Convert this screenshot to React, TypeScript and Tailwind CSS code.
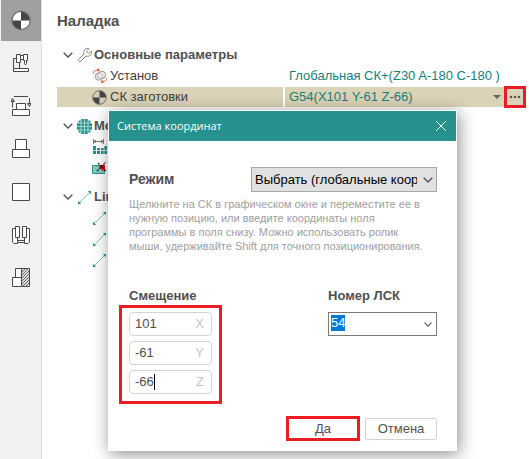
import { useState, ReactNode } from 'react';
import { Wrench } from 'lucide-react';

interface TreeRow {
  id: string;
  icon: ReactNode;
  label?: string;
  value?: string;
}

// Datum symbol: a circle split into quarters
const DatumIcon = ({ className, light = '#fff' }: { className: string; light?: string }) => (
  <svg viewBox="0 0 20 20" className={className} aria-hidden="true">
    <circle cx="10" cy="10" r="9.2" fill={light} />
    <path d="M10 1A9 9 0 0 1 19 10H10ZM10 19A9 9 0 0 1 1 10H10Z" fill="#444" />
    <circle cx="10" cy="10" r="9.1" fill="none" stroke="#666" strokeWidth="1.2" />
  </svg>
);

const ToolSvg = ({ children }: { children: ReactNode }) => (
  <svg viewBox="0 0 20 21" className="h-[21px] w-5" fill="#fff" stroke="#484848" aria-hidden="true">
    {children}
  </svg>
);

const tools = [
  {
    id: 'machine',
    title: 'Станок',
    icon: (
      <ToolSvg>
        <path d="M5.5 6.5H2.5V16.5M8.5 10.5V16.5" fill="none" />
        <path d="M2.5 16.5H17.5V19.5H2.5Z" />
        <path d="M9.5 3.5H12.5V7.5H9.5Z" />
        <path d="M5.5 2.5H9.5V10.5H5.5ZM12.5 2.5H16.5V8.5H12.5Z" />
        <path d="M13.5 8.5V11.5L14.5 13L15.5 11.5V8.5" />
      </ToolSvg>
    ),
  },
  {
    id: 'setup',
    title: 'Установка',
    icon: (
      <ToolSvg>
        <path d="M3 1.5H17M1.5 4V12.5M18.5 3V11" fill="none" />
        <path d="M-0.5 6.5L1.5 3.5L3.5 6.5ZM16.5 8.5L18.5 11.5L20.5 8.5Z" fill="#aaa" />
        <path d="M5.5 8.5H14.5V14.5H5.5ZM1.5 14.5H18.5V20.5H1.5Z" />
      </ToolSvg>
    ),
  },
  {
    id: 'part',
    title: 'Деталь',
    icon: (
      <ToolSvg>
        <path d="M4.5 1.5H15.5V11.5H4.5ZM1.5 11.5H18.5V19.5H1.5Z" />
      </ToolSvg>
    ),
  },
  {
    id: 'stock',
    title: 'Заготовка',
    icon: (
      <ToolSvg>
        <path d="M1.5 2.5H18.5V19.5H1.5Z" />
      </ToolSvg>
    ),
  },
  {
    id: 'fixture',
    title: 'Оснастка',
    icon: (
      <ToolSvg>
        <path d="M4.5 4.5H1.5V18L3 19.5H6.5V13.5M15.5 4.5H18.5V18L17 19.5H13.5V13.5" />
        <path d="M6.5 16.5H13.5M6.5 18.5H13.5" fill="none" />
        <path d="M4.5 2.5H8.5V13.5H4.5ZM11.5 2.5H15.5V13.5H11.5Z" />
      </ToolSvg>
    ),
  },
  {
    id: 'rest',
    title: 'Остаток',
    icon: (
      <ToolSvg>
        <path d="M4.5 1.5H10.5V10.5H4.5ZM1.5 10.5H10.5V19.5H1.5Z" />
        <path d="M10.5 1.5H18.5V19.5H10.5Z" fill="#ddd" />
        <path
          d="M11 5L14 2M11 8L17 2M11 11L18 4M11 14L18 7M11 17L18 10M12 19L18 13M15 19L18 16"
          fill="none"
          strokeWidth="0.8"
        />
      </ToolSvg>
    ),
  },
];

const Chevron = ({ className }: { className: string }) => (
  <svg viewBox="0 0 10 6" className={className} fill="none" stroke="#555" strokeWidth="1.4" aria-hidden="true">
    <path d="M0.7 0.7L5 5L9.3 0.7" />
  </svg>
);

const RotateIcon = () => (
  <svg viewBox="0 0 16 16" className="size-4" fill="none" aria-hidden="true">
    <path d="M1 5.5C1.5 3.5 3 2.2 5 2M15 9.5C14.8 11.5 13 13.5 11 13.8" stroke="#f4866c" strokeWidth="1.1" />
    <path d="M5 0.8H7.4V3.2H5ZM9 12.6H11.4V15H9Z" fill="#ee6546" />
    <circle cx="9.8" cy="7" r="3.8" fill="#f4f4f4" stroke="#888" strokeWidth="0.9" />
    <circle cx="6.8" cy="8.6" r="3.7" fill="#ddd" stroke="#999" strokeWidth="0.9" />
    <circle cx="8.4" cy="7.6" r="2.6" fill="#eee" stroke="#aaa" strokeWidth="0.7" />
  </svg>
);

const MeshIcon = () => (
  <svg viewBox="0 0 15 15" className="size-[15px]" fill="#26938d" aria-hidden="true">
    <path d="M4 0H11V1.5H13.5V4H15V11H13.5V13.5H11V15H4V13.5H1.5V11H0V4H1.5V1.5H4Z" />
    <path d="M4 0V15M7.5 0V15M11 0V15M0 4H15M0 7.5H15M0 11H15" stroke="#c4e3e1" strokeWidth="0.8" />
  </svg>
);

const SpacingIcon = () => (
  <svg viewBox="0 0 16 16" className="size-4" aria-hidden="true">
    <path d="M1.5 0V5M11.5 0V5M2 2.5H11M4 1L2 2.5L4 4M9 1L11 2.5L9 4" fill="none" stroke="#555" strokeWidth="0.8" />
    <path d="M1 7H4V15H1ZM5 9H8V15H5ZM9 9H12V15H9ZM12 7H15V15H12Z" fill="#26938d" />
    <path d="M0 11.5H16M4.5 6V16M8.5 6V16M12 6V16" stroke="#fff" strokeWidth="0.7" />
  </svg>
);

const ToleranceIcon = () => (
  <svg viewBox="0 0 16 16" className="size-4" aria-hidden="true">
    <path d="M0.5 5.5H12.5V13.5H0.5Z" fill="#86c5c1" stroke="#26938d" />
    <path d="M7 5L13 5V11C10 10.5 7.5 9 7 5Z" fill="#f00" />
    <path d="M5 11L14 2M6 3L14 11" stroke="#111" strokeWidth="1.1" strokeDasharray="2 1" />
  </svg>
);

const LinkIcon = () => (
  <svg viewBox="0 0 15 15" className="size-[15px]" aria-hidden="true">
    <path d="M2 13L13 2" stroke="#6bb7b2" strokeWidth="0.9" />
    <path d="M10.8 1H14V4.2ZM1 10.8V14H4.2Z" fill="#26938d" />
  </svg>
);

const groups: { id: string; icon: ReactNode; label: string; rows: TreeRow[] }[] = [
  {
    id: 'main',
    icon: <Wrench className="size-4 text-[#808080]" strokeWidth={1.4} />,
    label: 'Основные параметры',
    rows: [
      { id: 'setup', icon: <RotateIcon />, label: 'Установ', value: 'Глобальная СК+(Z30 A-180 C-180 )' },
      {
        id: 'wcs',
        icon: <DatumIcon className="size-[15px]" light="#d3ccb6" />,
        label: 'СК заготовки',
        value: 'G54(X101 Y-61 Z-66)',
      },
    ],
  },
  {
    id: 'mesh',
    icon: <MeshIcon />,
    label: 'Ме',
    rows: [
      { id: 'spacing', icon: <SpacingIcon /> },
      { id: 'tolerance', icon: <ToleranceIcon /> },
    ],
  },
  {
    id: 'links',
    icon: <LinkIcon />,
    label: 'Lin',
    rows: [
      { id: 'link1', icon: <LinkIcon /> },
      { id: 'link2', icon: <LinkIcon /> },
      { id: 'link3', icon: <LinkIcon /> },
    ],
  },
];

const SetupTree = ({ selected, onSelect }: { selected: string; onSelect: (id: string) => void }) => (
  <div className="mt-[14px] flex flex-col gap-[9px]">
    {groups.map((group) => (
      <section key={group.id} className="flex flex-col gap-px">
        <div className="flex h-5 items-center pl-[6px]">
          <Chevron className="h-[6px] w-[10px]" />
          <span className="ml-1 flex w-[17px]">{group.icon}</span>
          <h2 className="text-[13px] leading-5 font-bold whitespace-nowrap text-[#505050]">{group.label}</h2>
        </div>
        {group.rows.map((row) => (
          <div
            key={row.id}
            onClick={() => onSelect(row.id)}
            className={`flex h-5 text-[13px] leading-5 whitespace-nowrap ${row.id === selected ? 'bg-[#dbd3b8]' : ''}`}
          >
            <div className="flex w-[226px] shrink-0 items-center pl-[35px]">
              <span className="flex w-[18px] shrink-0">{row.icon}</span>
              <span className="text-[#404040]">{row.label}</span>
            </div>
            {row.value && (
              <div className="flex min-w-0 flex-1 items-center border-l-2 border-white pl-1 text-[#14807a]">
                <span>{row.value}</span>
                {row.id === selected && (
                  <>
                    <button type="button" aria-label="Список" className="ml-auto px-[3px]">
                      <svg viewBox="0 0 8 4" className="h-1 w-2" fill="#666">
                        <path d="M0 0H8L4 4Z" />
                      </svg>
                    </button>
                    <button
                      type="button"
                      aria-label="Изменить"
                      className="-my-px flex h-[22px] w-[22px] shrink-0 items-center justify-center border-3 border-[#ed1c24]"
                    >
                      <svg viewBox="0 0 12 4" className="h-1 w-3" fill="#555">
                        <circle cx="2" cy="2" r="1.3" />
                        <circle cx="6" cy="2" r="1.3" />
                        <circle cx="10" cy="2" r="1.3" />
                      </svg>
                    </button>
                  </>
                )}
              </div>
            )}
          </div>
        ))}
      </section>
    ))}
  </div>
);

const axes = ['X', 'Y', 'Z'] as const;

const CoordinateDialog = ({ onClose }: { onClose: () => void }) => {
  const [offset, setOffset] = useState({ X: '101', Y: '-61', Z: '-66' });
  const [lcs, setLcs] = useState('54');

  return (
    <div
      role="dialog"
      aria-labelledby="dialog-title"
      className="absolute top-[110px] left-[108px] w-[349px] border border-white bg-white text-[13px] text-[#505050] shadow-[2px_3px_16px_rgba(0,0,0,0.45)]"
    >
      <header className="flex h-[30px] items-center justify-between bg-[#26918d] pr-[9px] pl-2 text-white">
        <h2 id="dialog-title" className="font-['Open_Sans','Noto_Sans',sans-serif] text-[11px]">
          Система координат
        </h2>
        <button type="button" aria-label="Закрыть" onClick={onClose}>
          <svg viewBox="0 0 12 12" className="size-3" stroke="currentColor">
            <path d="M1 1L11 11M11 1L1 11" />
          </svg>
        </button>
      </header>

      <div className="px-[19px] pt-[26px] pb-[9px]">
        <div className="flex items-center justify-between pl-px">
          <label htmlFor="mode" className="text-[14px] font-bold">
            Режим
          </label>
          <div className="relative">
            <select
              id="mode"
              className="block h-[25px] w-[186px] appearance-none overflow-hidden border border-[#a9a9a9] bg-[#e1e1e1] pr-[19px] pl-[3px] text-black"
            >
              <option>Выбрать (глобальные координаты)</option>
            </select>
            <Chevron className="pointer-events-none absolute top-[10px] right-1 h-[6px] w-[10px]" />
          </div>
        </div>

        <p className="mt-[5px] pr-2 pl-px text-[11px] leading-[14px] text-[#a0a0a0]">
          Щелкните на СК в графическом окне и переместите ее в нужную позицию, или введите координаты ноля программы в
          поля снизу. Можно использовать ролик мыши, удерживайте Shift для точного позиционирования.
        </p>

        <div className="mt-[34px] flex items-start justify-between">
          <fieldset>
            <legend className="pl-px leading-[18px] font-bold">Смещение</legend>
            <div className="-ml-[9px] flex w-[103px] flex-col gap-[5px] border-3 border-[#ed1c24] px-[7px] pt-1 pb-[7px]">
              {axes.map((axis) => (
                <label
                  key={axis}
                  className="flex h-6 w-[83px] items-center rounded border border-[#d4d4d4] pr-[7px] pl-[5px]"
                >
                  <input
                    value={offset[axis]}
                    onChange={(e) => setOffset({ ...offset, [axis]: e.target.value })}
                    className="field-sizing-content outline-none"
                  />
                  {axis === 'Z' && <span className="h-4 w-px bg-black" />}
                  <span className="ml-auto text-[#c4c4c4]">{axis}</span>
                </label>
              ))}
            </div>
          </fieldset>

          <div className="w-[109px]">
            <label htmlFor="lcs" className="block leading-[18px] font-bold">
              Номер ЛСК
            </label>
            <div className="mt-[7px] flex h-6 items-start justify-between border border-[#7a7a7a] py-[2px] pr-1 pl-[2px]">
              <input
                id="lcs"
                value={lcs}
                onChange={(e) => setLcs(e.target.value)}
                className="field-sizing-content h-4 bg-[#0078d7] leading-4 text-white outline-none"
              />
              <button type="button" aria-label="Выбрать номер" className="self-center">
                <Chevron className="h-[5px] w-2" />
              </button>
            </div>
          </div>
        </div>

        <div className="mt-3 flex items-center justify-end gap-[5px]">
          <button
            type="button"
            onClick={onClose}
            className="h-[25px] w-[74px] border-3 border-[#ed1c24] leading-[19px]"
          >
            Да
          </button>
          <button
            type="button"
            onClick={onClose}
            className="h-[22px] w-[72px] rounded-xs border border-[#d4d4d4] leading-5"
          >
            Отмена
          </button>
        </div>
      </div>
    </div>
  );
};

export default function App() {
  const [selected, setSelected] = useState('wcs');
  const [dialogOpen, setDialogOpen] = useState(true);

  return (
    <div className="relative flex min-h-screen bg-white font-['Liberation_Sans',Arial,sans-serif]">
      <nav className="flex w-[42px] shrink-0 flex-col border-r border-[#e0e0e0] bg-[#f1f1f1] pl-px">
        <button
          type="button"
          aria-label="Наладка"
          onClick={() => setDialogOpen(true)}
          className="flex h-[41px] items-center justify-center bg-[#9f9f9f]"
        >
          <DatumIcon className="h-[21px] w-5" />
        </button>
        {tools.map((tool) => (
          <button
            key={tool.id}
            type="button"
            aria-label={tool.title}
            className="flex h-[43px] items-center justify-center"
          >
            {tool.icon}
          </button>
        ))}
      </nav>

      <main className="min-w-0 flex-1 pt-[11px] pr-[3px] pl-[15px]">
        <h1 className="text-[15px] leading-5 font-bold text-[#505050]">Наладка</h1>
        <SetupTree selected={selected} onSelect={setSelected} />
      </main>

      {dialogOpen && <CoordinateDialog onClose={() => setDialogOpen(false)} />}
    </div>
  );
}
